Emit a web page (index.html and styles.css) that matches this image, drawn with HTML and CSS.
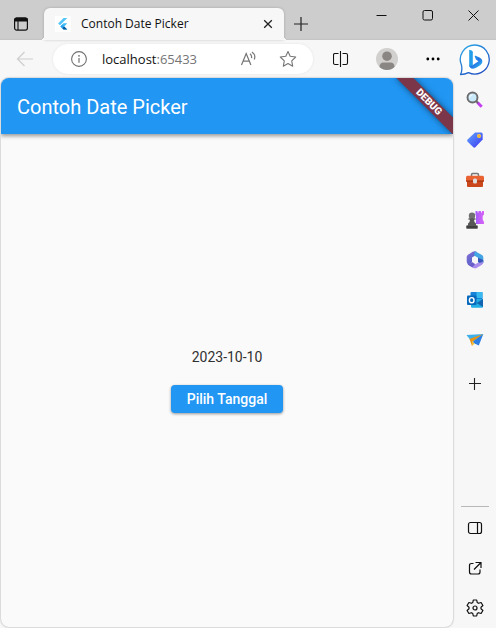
FILE: index.html
```html
<!DOCTYPE html>
<html lang="id">
<head>
<meta charset="utf-8">
<title>Contoh Date Picker</title>
<link rel="stylesheet" href="styles.css">
</head>
<body>
<header class="titlebar">
  <button class="tab-actions" aria-label="Tab actions">
    <svg width="16" height="16" viewBox="0 0 16 16"><rect x="1.6" y="2" width="12.8" height="12.2" rx="2.2" fill="none" stroke="#111" stroke-width="1.2"/><path d="M1 5.400V4A2.600 2.600 0 0 1 3.600 1.400H12.400A2.600 2.600 0 0 1 15 4V5.400Z" fill="#111"/><path d="M5 5V14" stroke="#111" stroke-width="1.100"/></svg>
  </button>
  <div class="tab">
    <svg class="favicon" width="16" height="16" viewBox="0 0 16 16"><rect width="16" height="16" fill="#fff"/><path d="M8.500 2H12.300L5 9.300L3.100 7.400Z" fill="#54c5f8"/><path d="M8.500 7.200H12.300L9.200 10.400L12.300 13.500H8.500L5.400 10.400Z" fill="#40bdf5"/><path d="M5.400 10.400L7.300 8.600L9.200 10.400L7.300 12.200Z" fill="#29a5ee"/><path d="M7.300 12.200L9.200 10.400L12.300 13.500H8.500Z" fill="#06579b"/></svg>
    <span class="tab-title">Contoh Date Picker</span>
    <button class="tab-close" aria-label="Close tab">
      <svg width="10" height="10" viewBox="0 0 10 10"><path d="M1.200 1.200L8.800 8.800M8.800 1.200L1.200 8.800" stroke="#222" stroke-width="1.300"/></svg>
    </button>
  </div>
  <button class="new-tab" aria-label="New tab">
    <svg width="14" height="14" viewBox="0 0 14 14"><path d="M7 0V14M0 7H14" stroke="#222" stroke-width="1.200"/></svg>
  </button>
  <div class="window-controls">
    <button class="window-button" aria-label="Minimize"><svg width="11" height="11" viewBox="0 0 11 11"><path d="M.500 5.500H10.500" stroke="#111"/></svg></button>
    <button class="window-button" aria-label="Maximize"><svg width="11" height="11" viewBox="0 0 11 11"><rect x="1" y=".500" width="9.500" height="9.500" rx="1.500" fill="none" stroke="#111"/></svg></button>
    <button class="window-button" aria-label="Close"><svg width="11" height="11" viewBox="0 0 11 11"><path d="M.500 .500L10.500 10.500M10.500 .500L.500 10.500" stroke="#111"/></svg></button>
  </div>
</header>
<div class="window">
  <div class="browser">
    <div class="toolbar">
      <button class="back" aria-label="Back"><svg width="18" height="16" viewBox="0 0 18 16"><path d="M17 8H1.500M8.500 1L1.500 8L8.500 15" fill="none" stroke="#cecece" stroke-width="1.200"/></svg></button>
      <div class="address">
        <svg width="16" height="16" viewBox="0 0 16 16"><circle cx="8" cy="8" r="7.400" fill="none" stroke="#707070" stroke-width="1.100"/><path d="M8 7V11.700" stroke="#707070" stroke-width="1.200"/><circle cx="8" cy="4.800" r=".900" fill="#707070"/></svg>
        <span class="url">localhost<span class="port">:65433</span></span>
        <button class="address-button" aria-label="Read aloud"><svg width="18" height="16" viewBox="0 0 18 16" fill="none" stroke="#757575" stroke-width="1.200"><path d="M2.500 14L7.200 2.500L11.900 14M4.100 10.200H10.300"/><path d="M11 2.800Q13.100 4.500 12.500 7.200M13 .900Q17.200 4 15.200 8.500"/></svg></button>
        <button class="address-button" aria-label="Add to favorites"><svg width="18" height="18" viewBox="0 0 18 18"><path d="M9 1.500L11.200 6.300L16.700 7L12.700 10.800L13.700 16.200L9 13.600L4.300 16.200L5.300 10.800L1.300 7L6.800 6.300Z" fill="none" stroke="#757575" stroke-width="1.100" stroke-linejoin="round"/></svg></button>
      </div>
      <button class="tool" aria-label="Split screen"><svg width="16" height="16" viewBox="0 0 16 16" fill="none" stroke="#111" stroke-width="1.100"><path d="M5.500 2.500H2Q.500 2.500 .500 4V12Q.500 13.500 2 13.500H5.500M9.500 2.500H13Q14.500 2.500 14.500 4V12Q14.500 13.500 13 13.500H9.500M7.500 0V16"/></svg></button>
      <button class="tool" aria-label="Profile"><svg width="22" height="22" viewBox="0 0 22 22"><circle cx="11" cy="11" r="11" fill="#d2d0ce"/><circle cx="11" cy="8.200" r="4.800" fill="#8a8684"/><path d="M3.500 19Q3.500 14.500 7.500 14.500H14.500Q18.500 14.500 18.500 19Q15.500 22 11 22Q6.500 22 3.500 19Z" fill="#8a8684"/></svg></button>
      <button class="tool" aria-label="Settings and more"><svg width="14" height="4" viewBox="0 0 14 4"><circle cx="1.800" cy="2" r="1.400"/><circle cx="7" cy="2" r="1.400"/><circle cx="12.200" cy="2" r="1.400"/></svg></button>
    </div>
    <main class="app">
      <div class="appbar">
        <h1 class="app-title">Contoh Date Picker</h1>
        <div class="debug">DEBUG</div>
      </div>
      <section class="content">
        <p class="date">2023-10-10</p>
        <button class="pick">Pilih Tanggal</button>
      </section>
    </main>
  </div>
  <aside class="sidebar">
    <button class="side" aria-label="Bing">
      <svg width="32" height="34" viewBox="0 0 32 34"><defs><linearGradient id="ring" x1="0" y1="0" x2=".600" y2="1"><stop offset="0" stop-color="#2ba9e8"/><stop offset="1" stop-color="#2053c5"/></linearGradient><linearGradient id="bing" x1="0" y1="0" x2="1" y2="1"><stop offset="0" stop-color="#24b4ef"/><stop offset=".500" stop-color="#2373e5"/><stop offset="1" stop-color="#31c9ee"/></linearGradient></defs><path d="M16 2A14.500 14.500 0 1 1 9.500 29.600Q6 31.500 1.500 31.500Q3.500 28 2.600 22.500A14.500 14.500 0 0 1 16 2Z" fill="#fff" stroke="url(#ring)" stroke-width="1.300" stroke-linejoin="round"/><path d="M10.200 6.700L12.700 7.500Q13.800 8 13.800 9.300V22.500L10.800 24Q10.200 23.500 10.200 22.500Z" fill="#239fe9"/><path d="M10.200 21.500Q10.500 25.800 14 25.700Q16 25.500 18 24.200L21.500 22Q23.500 20.500 23.400 18Q23.200 15.500 20.500 14.500L16.700 12.800Q15.300 12.400 15.800 13.700L17 16.600L19.500 18.200L13.500 22.200Q11 23.500 10.200 21.500Z" fill="url(#bing)"/></svg>
    </button>
    <button class="side" aria-label="Search">
      <svg width="18" height="18" viewBox="0 0 18 18"><path d="M11.500 11.500L15.700 15.700" stroke="#c33cf0" stroke-width="3"/><path d="M10 10L12 12" stroke="#666" stroke-width="2"/><circle cx="6.500" cy="6.500" r="5" fill="#c9e9fa" stroke="#6b6b6b" stroke-width="1.900"/><path d="M3.700 6.500Q4 4 6.500 3.700" fill="none" stroke="#fff"/></svg>
    </button>
    <button class="side" aria-label="Shopping">
      <svg width="18" height="18" viewBox="0 0 18 18"><defs><linearGradient id="tag" x1="0" y1="0" x2="1" y2="1"><stop offset="0" stop-color="#5fa7ff"/><stop offset="1" stop-color="#3e35ef"/></linearGradient></defs><path d="M9 1.500H15.200Q16.700 1.500 16.700 3V8.500L9.300 16.300Q8.300 17.200 7.300 16.300L1.500 10.500Q.700 9.500 1.600 8.600Z" fill="url(#tag)"/><circle cx="13" cy="5" r="2" fill="#ffd23c"/><circle cx="13" cy="5" r=".800" fill="#e77c35"/></svg>
    </button>
    <button class="side" aria-label="Tools">
      <svg width="18" height="18" viewBox="0 0 18 18"><path d="M5.500 5.500V3.700Q5.500 2.500 6.700 2.500H11.300Q12.500 2.500 12.500 3.700V5.500" fill="none" stroke="#777" stroke-width="1.500"/><rect y="4.700" width="18" height="6.300" rx="1.500" fill="#e96332"/><path d="M1 10H17V15Q17 16 16 16H2Q1 16 1 15Z" fill="#c9471a"/><path d="M0 10H18" stroke="#9b310e"/><rect x="7" y="7.500" width="4" height="5" rx="1.500" fill="#ddd"/></svg>
    </button>
    <button class="side" aria-label="Games">
      <svg width="20" height="20" viewBox="0 0 20 20"><defs><linearGradient id="rook"><stop offset="0" stop-color="#a15bfa"/><stop offset="1" stop-color="#db64f7"/></linearGradient></defs><path d="M10.500 1H12.500V2.500H13.500V1H16V2.500H17V1H19V4.500L17.700 6V9.500L19 12V14H11V6L10.500 4.500Z" fill="url(#rook)"/><circle cx="7" cy="5.700" r="3.200" fill="#707070"/><path d="M3.500 8.300H10.500V9.800H9Q9 12.500 11 13.500V15.200H12.500V18.500H1.500V15.200H3V13.500Q5 12.500 5 9.800H3.500Z" fill="#575757"/><path d="M1.500 16H12.500V18.500H1.500Z" fill="#3f3f3f"/></svg>
    </button>
    <button class="side" aria-label="Microsoft 365">
      <svg width="18" height="18" viewBox="0 0 18 18"><defs><linearGradient id="suite" x1="0" y1="0" x2="1" y2="1"><stop offset="0" stop-color="#8d6fd6"/><stop offset="1" stop-color="#3c5fc4"/></linearGradient></defs><path d="M6.700 .700Q9 -.500 11 .900L8.800 4.800L6 6.400V11L3.500 13.700L1.800 12.500Q.700 11.800 .700 10.500V6Q.700 4.500 2 3.700Z" fill="url(#suite)"/><path d="M9.500 .400L16 4Q17.300 4.800 17.300 6.300V11.500Q16.500 13.300 14 12.500L12 11V6.800L8.500 4.700Q7.500 2 9.500 .400Z" fill="#43a5e4"/><path d="M12 6.800L17.300 9V11.500Q16.500 13.300 14 12.500L12 11Z" fill="#3558b8"/><path d="M17.300 10Q17.300 12.800 16 13.700L10.500 17Q9 17.800 7.500 17L2 13.700Q4.500 14.400 7 12.800L9.200 13.200L12.300 11.500Q15.500 12.500 17.300 10Z" fill="#a98ded"/><path d="M1 11.700Q3.500 14 6 11L9 13L6.500 16.500L2 13.700Z" fill="#6a5fc9"/></svg>
    </button>
    <button class="side" aria-label="Outlook">
      <svg width="18" height="18" viewBox="0 0 18 18"><rect x="4.500" y="1" width="12" height="12" rx="1" fill="#1683d8"/><path d="M10.500 1H16.500V7H10.500Z" fill="#39b9ee"/><path d="M4.500 7H10.500V13H4.500Z" fill="#0867b1"/><path d="M5 8H17V15.500Q17 16.700 16 16.700H6Q5 16.700 5 15.500Z" fill="#24aee5"/><path d="M17 8V16L10.500 12Z" fill="#1265b1"/><rect x="1" y="4.500" width="9.500" height="9.500" rx="1" fill="#0868bb"/><ellipse cx="5.700" cy="9.200" rx="2.300" ry="2.600" fill="none" stroke="#fff" stroke-width="1.400"/></svg>
    </button>
    <button class="side" aria-label="Drop">
      <svg width="18" height="18" viewBox="0 0 18 18"><path d="M.500 4L17.300 3L10.500 11L4 8.500Z" fill="#3eafe9"/><path d="M3.500 8L17.300 3L6 11V15Z" fill="#e79314"/><path d="M6.500 11L17.300 3L12.800 14.500L8.700 12.400Z" fill="#2c7fe4"/><path d="M6 10.500L8.700 12.400L6 15Z" fill="#f6bd31"/></svg>
    </button>
    <button class="side side-add" aria-label="Customize sidebar">
      <svg width="12" height="12" viewBox="0 0 12 12"><path d="M5.500 0V12M0 5.500H12" stroke="#222" stroke-width="1.100"/></svg>
    </button>
    <div class="side-bottom">
      <button class="side" aria-label="Hide sidebar"><svg width="16" height="16" viewBox="0 0 16 16" fill="none" stroke="#111" stroke-width="1.200"><rect x="1.500" y="2.500" width="13" height="11" rx="2"/><path d="M10.500 2.500V13.500"/></svg></button>
      <button class="side" aria-label="Open link"><svg width="16" height="16" viewBox="0 0 16 16" fill="none" stroke="#111" stroke-width="1.200"><path d="M6.500 3.500H4.500Q2.500 3.500 2.500 5.500V12Q2.500 14 4.500 14H11Q13 14 13 12V9.500M8.500 2.500H14V8M14 2.500L7 9.500"/></svg></button>
      <button class="side" aria-label="Settings"><svg width="18" height="18" viewBox="0 0 18 18" fill="none" stroke="#111" stroke-width="1.200" stroke-linejoin="round"><path d="M7.300 1H10.700L11.200 3.500L12.500 4.300L15.100 3.500L16.900 6.500L15 8.200V9.800L16.900 11.500L15.100 14.500L12.500 13.700L11.200 14.500L10.700 17H7.300L6.800 14.500L5.500 13.700L2.900 14.500L1.100 11.500L3 9.800V8.200L1.100 6.500L2.900 3.500L5.500 4.300L6.800 3.500Z"/><circle cx="9" cy="9" r="2"/></svg></button>
    </div>
  </aside>
</div>
</body>
</html>
```
FILE: styles.css
```css
* {
  box-sizing: border-box;
}

body {
  margin: 0;
  min-height: 100vh;
  display: flex;
  flex-direction: column;
  background: #f7f7f7;
  font-family: "Open Sans", "Noto Sans", sans-serif;
  color: #111;
}

button {
  margin: 0;
  padding: 0;
  border: 0;
  background: none;
  font: inherit;
  color: inherit;
  display: flex;
  align-items: center;
  justify-content: center;
}

svg {
  display: block;
  flex: none;
}

.titlebar {
  height: 40px;
  display: flex;
  align-items: flex-end;
  background: linear-gradient(#cdcdcd 38px, #c2c2c2);
}

.tab-actions {
  width: 42px;
  height: 32px;
  margin-right: 2px;
}

.tab {
  position: relative;
  flex: 0 1 240px;
  height: 32px;
  padding: 0 10px 0 11px;
  display: flex;
  align-items: center;
  gap: 10px;
  background: #f7f7f7;
  border-radius: 6px 6px 0 0;
  box-shadow: 0 0 3px rgba(0, 0, 0, 0.2);
}

.tab::before,
.tab::after {
  content: "";
  position: absolute;
  bottom: 0;
  width: 4px;
  height: 4px;
}

.tab::before {
  right: 100%;
  background: radial-gradient(circle at 0 0, transparent 4px, #f7f7f7 4px);
}

.tab::after {
  left: 100%;
  background: radial-gradient(circle at 100% 0, transparent 4px, #f7f7f7 4px);
}

.tab-title {
  flex: 1;
  font-size: 12px;
  line-height: 16px;
  white-space: nowrap;
}

.tab-close {
  width: 12px;
  height: 16px;
}

.new-tab {
  width: 34px;
  height: 32px;
}

.window-controls {
  margin-left: auto;
  align-self: flex-start;
  display: flex;
}

.window-button {
  width: 46px;
  height: 30px;
}

.window {
  flex: 1;
  display: flex;
}

.browser {
  flex: 1;
  min-width: 0;
  display: flex;
  flex-direction: column;
}

.toolbar {
  height: 38px;
  padding: 0 1px 0 16px;
  display: flex;
  align-items: center;
}

.back {
  width: 18px;
  height: 30px;
}

.address {
  flex: 1;
  height: 30px;
  margin: 0 8px 0 19px;
  padding: 0 16px 0 18px;
  display: flex;
  align-items: center;
  background: #fff;
  border-radius: 15px;
  box-shadow: 0 0 3px rgba(0, 0, 0, 0.08);
}

.url {
  flex: 1;
  margin-left: 15px;
  font-size: 13px;
  line-height: 20px;
}

.port {
  color: #757575;
}

.address-button {
  width: 18px;
  height: 24px;
}

.address-button + .address-button {
  margin-left: 22px;
}

.tool {
  width: 40px;
  height: 30px;
}

.tool + .tool {
  margin-left: 6px;
}

.app {
  flex: 1;
  margin: 0 1px 1px;
  display: flex;
  flex-direction: column;
  overflow: hidden;
  background: #fafafa;
  border-radius: 8px;
  box-shadow: 0 0 2px rgba(0, 0, 0, 0.4);
  font-family: Roboto, sans-serif;
}

.appbar {
  position: relative;
  height: 56px;
  padding: 2px 16px 0;
  display: flex;
  align-items: center;
  overflow: hidden;
  background: #2196f3;
  box-shadow: 0 2px 4px rgba(0, 0, 0, 0.4);
}

.app-title {
  margin: 0;
  font-size: 20px;
  line-height: 24px;
  font-weight: 400;
  color: #fff;
}

/* Diagonal ribbon across the top-right corner of the app bar */
.debug {
  position: absolute;
  top: 28px;
  right: -40px;
  width: 80px;
  height: 12px;
  transform: rotate(45deg);
  transform-origin: 50% -28px;
  background: #7c3649;
  box-shadow: 0 0 6px rgba(0, 0, 0, 0.5);
  font-size: 10px;
  line-height: 12px;
  font-weight: 900;
  text-align: center;
  color: #fff;
}

.content {
  flex: 1;
  display: flex;
  flex-direction: column;
  align-items: center;
  justify-content: center;
  gap: 20px;
}

.date {
  margin: 0;
  font-size: 14px;
  line-height: 16px;
  color: #313131;
}

.pick {
  height: 28px;
  padding: 0 16px;
  border-radius: 4px;
  background: #2196f3;
  box-shadow: 0 1px 3px rgba(0, 0, 0, 0.4);
  font-size: 14px;
  line-height: 16px;
  font-weight: 500;
  color: #fff;
}

.sidebar {
  width: 42px;
  display: flex;
  flex-direction: column;
}

.side {
  width: 42px;
  height: 40px;
}

.side-add {
  margin-top: 4px;
}

.side-bottom {
  margin-top: auto;
}

.side-bottom::before {
  content: "";
  display: block;
  height: 1px;
  margin: 0 7px 1px;
  background: #b8b8b8;
}
```
